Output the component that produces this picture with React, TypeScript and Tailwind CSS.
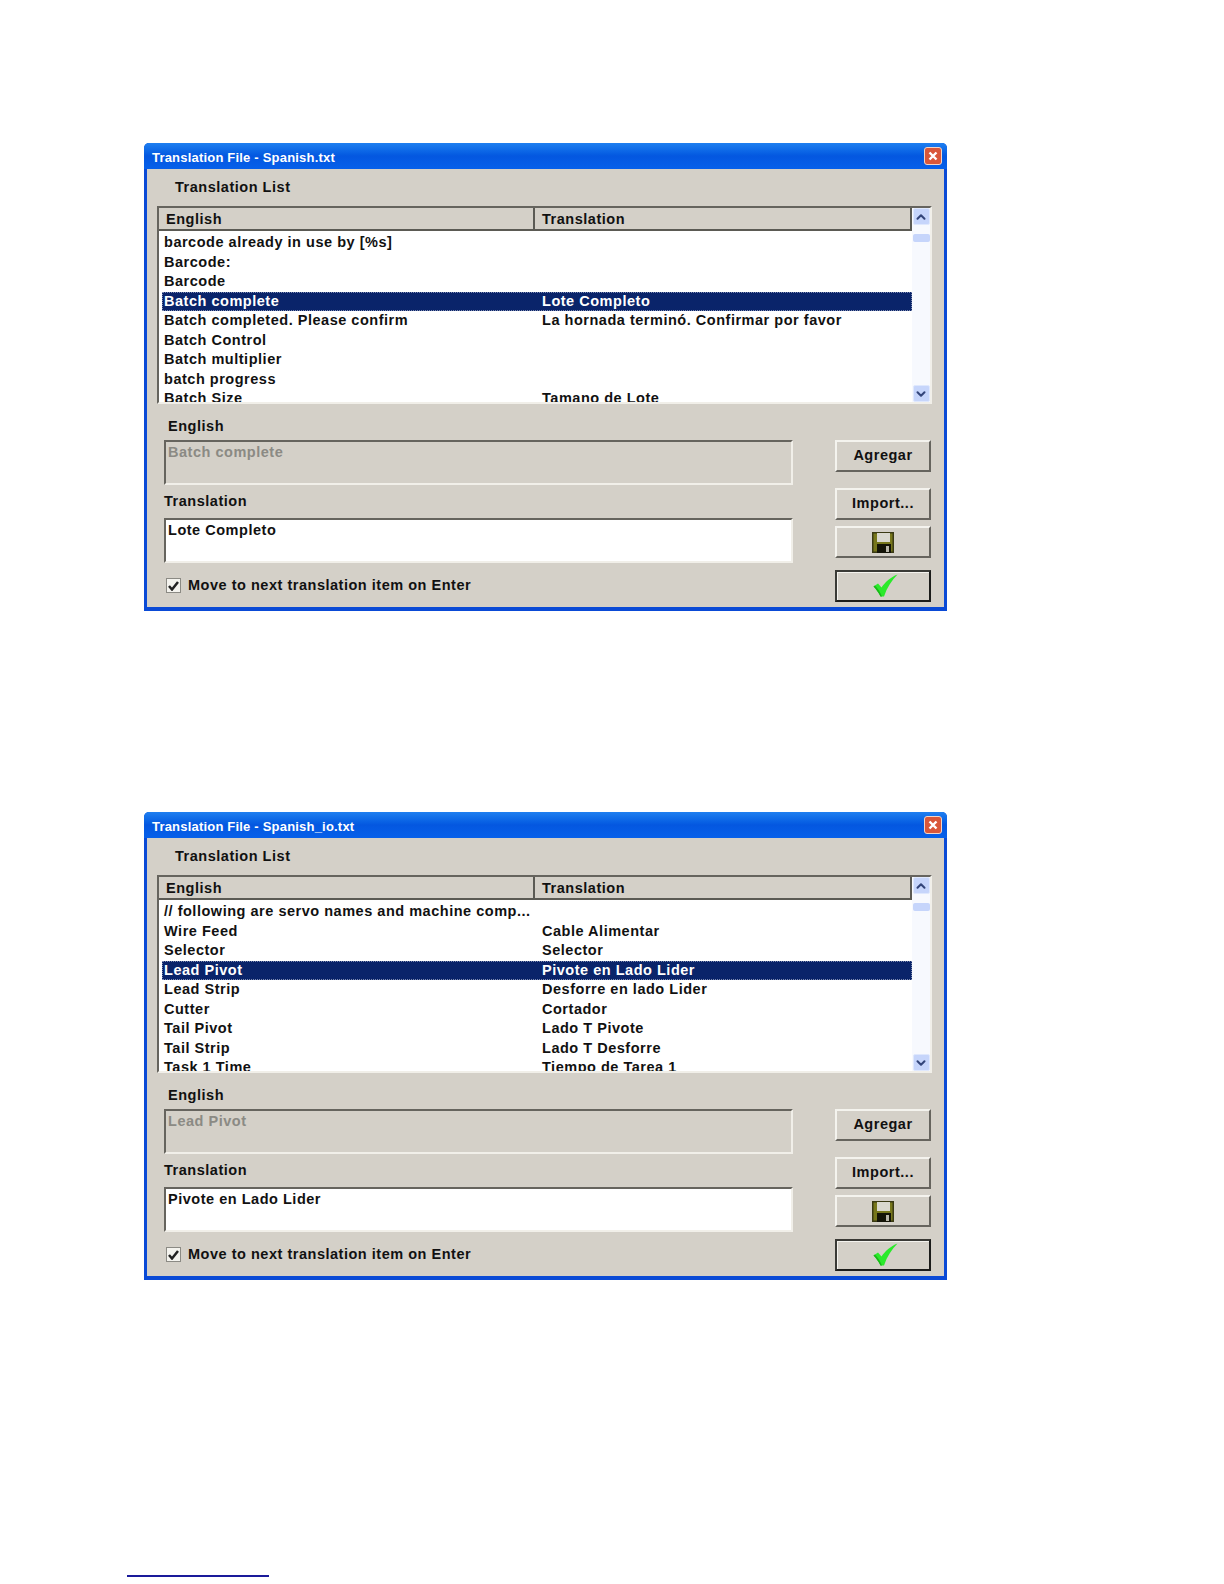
import { ChevronDown, ChevronUp } from 'lucide-react';

type Row = { en: string; tr?: string; selected?: boolean };

const firstRows: Row[] = [
  { en: 'barcode already in use by [%s]' },
  { en: 'Barcode:' },
  { en: 'Barcode' },
  { en: 'Batch complete', tr: 'Lote Completo', selected: true },
  { en: 'Batch completed. Please confirm', tr: 'La hornada terminó. Confirmar por favor' },
  { en: 'Batch Control' },
  { en: 'Batch multiplier' },
  { en: 'batch progress' },
  { en: 'Batch Size', tr: 'Tamano de Lote' },
];

const secondRows: Row[] = [
  { en: '// following are servo names and machine comp...' },
  { en: 'Wire Feed', tr: 'Cable Alimentar' },
  { en: 'Selector', tr: 'Selector' },
  { en: 'Lead Pivot', tr: 'Pivote en Lado Lider', selected: true },
  { en: 'Lead Strip', tr: 'Desforre en lado Lider' },
  { en: 'Cutter', tr: 'Cortador' },
  { en: 'Tail Pivot', tr: 'Lado T Pivote' },
  { en: 'Tail Strip', tr: 'Lado T Desforre' },
  { en: 'Task 1 Time', tr: 'Tiempo de Tarea 1' },
];

function CloseButton() {
  return (
    <div className="w-[18px] h-[18px] rounded-[3px] border border-[#f2d5c8] bg-[#d9573a] flex items-center justify-center">
      <svg width="12" height="12" viewBox="0 0 12 12">
        <path d="M2.5 2.5l7 7M9.5 2.5l-7 7" stroke="#ffffff" strokeWidth="2.4" />
      </svg>
    </div>
  );
}

function FloppyIcon() {
  return (
    <svg width="22" height="21" viewBox="0 0 22 21">
      <rect x="0" y="0" width="22" height="21" fill="#3a3a14" />
      <rect x="1.5" y="1.5" width="19" height="18" fill="#77771c" />
      <rect x="5" y="1" width="13" height="9" fill="#d9d8cf" />
      <rect x="5" y="12" width="14" height="9" fill="#141408" />
      <rect x="14" y="14" width="3" height="6" fill="#b8b6aa" />
    </svg>
  );
}

function CheckIcon() {
  return (
    <svg width="25" height="23" viewBox="0 0 25 23" className="ml-[4px] -mt-[1px]">
      <path d="M0.5 12.5L5 9.5L8.5 13.5C12 8.5 17.5 3 24.5 0.5C18.5 6.5 14 13.5 11 22.5H7.5C5.5 18.5 3 15 0.5 12.5Z" fill="#2bea2b" />
      <path d="M7.5 22.5C5.5 18.5 3 15 0.5 12.5L2 11.5C4.5 14.2 7.2 18 9 22.5Z" fill="#18b818" />
    </svg>
  );
}

function ScrollArrow({ down }: { down?: boolean }) {
  return (
    <div className="w-[17px] h-[17px] mx-auto rounded-[2px] bg-[#c6d5fb] border border-[#dfe8fd] flex items-center justify-center text-[#33457a]">
      {down ? <ChevronDown size={14} strokeWidth={3.5} /> : <ChevronUp size={14} strokeWidth={3.5} />}
    </div>
  );
}

function Win98Button({ children, isDefault }: { children: React.ReactNode; isDefault?: boolean }) {
  return (
    <div
      className={
        isDefault
          ? 'w-[96px] h-[32px] flex items-center justify-center border-2 border-t-[#3a3a36] border-l-[#3a3a36] border-r-[#1c1c1a] border-b-[#1c1c1a] bg-[#d4d0c8] shadow-[inset_1px_1px_0_#f4f3ee]'
          : 'w-[96px] h-[32px] flex items-center justify-center border-2 border-t-[#f4f3ee] border-l-[#f4f3ee] border-r-[#66645e] border-b-[#66645e] bg-[#d4d0c8]'
      }
    >
      {children}
    </div>
  );
}

function TranslationDialog({ title, rows, english, translation }: { title: string; rows: Row[]; english: string; translation: string }) {
  return (
    <div className="w-[803px] h-[468px] flex flex-col rounded-t-[5px] bg-[#0a4ad6] px-[3px] pb-[4px] font-['Liberation_Sans',sans-serif] font-bold text-[14.5px] tracking-[0.52px] text-[#111111]">
      {/* title bar */}
      <div className="h-[26px] -mx-[3px] shrink-0 rounded-t-[5px] bg-linear-to-b from-[#1f7ff0] via-[#0457e0] to-[#0660ea] flex items-center justify-between pl-[8px] pr-[5px]">
        <span className="text-white text-[13px] tracking-[0.2px] pt-[3px]">{title}</span>
        <CloseButton />
      </div>

      <div className="flex-1 bg-[#d4d0c8] flex flex-col">
        <div className="h-[37px] pl-[28px] flex items-center leading-none pb-[1px]">Translation List</div>

        {/* list */}
        <div className="ml-[10px] w-[775px] h-[198px] flex overflow-hidden border-2 border-t-[#66645e] border-l-[#66645e] border-r-[#f1efe9] border-b-[#f1efe9] bg-white">
          <div className="w-[753px] flex flex-col">
            <div className="h-[23px] shrink-0 flex bg-[#d4d0c8] border-b-2 border-r-2 border-[#5b5a54] leading-[22px]">
              <div className="w-[376px] pl-[7px] border-r-2 border-[#5b5a54]">English</div>
              <div className="pl-[7px]">Translation</div>
            </div>
            <div className="pt-[2px] pl-[3px]">
              {rows.map((row) => (
                <div
                  key={row.en}
                  className={
                    row.selected
                      ? 'h-[19.5px] flex leading-[18px] bg-[#0a246a] text-white outline-1 -outline-offset-1 outline-dotted outline-[#7f8cb0]'
                      : 'h-[19.5px] flex leading-[19px]'
                  }
                >
                  <div className="w-[380px] pl-[2px] whitespace-nowrap">{row.en}</div>
                  <div className="whitespace-nowrap">{row.tr}</div>
                </div>
              ))}
            </div>
          </div>
          <div className="flex-1 bg-[#f7f9fe] flex flex-col justify-between">
            <div>
              <ScrollArrow />
              <div className="w-[17px] h-[8px] mx-auto mt-[9px] rounded-[2px] bg-[#c6d5fb]" />
            </div>
            <ScrollArrow down />
          </div>
        </div>

        {/* edit area and buttons */}
        <div className="flex mt-[14px] pl-[17px]">
          <div className="w-[629px]">
            <div className="pl-[4px] h-[23px] leading-[19px] -mt-[1px]">English</div>
            <div className="w-[629px] h-[45px] border-2 border-t-[#66645e] border-l-[#66645e] border-r-[#f1efe9] border-b-[#f1efe9] pl-[2px] leading-[21px] text-[#8b8a84]">
              {english}
            </div>
            <div className="h-[33px] flex items-center pt-[1px]">Translation</div>
            <div className="w-[629px] h-[45px] bg-white border-2 border-t-[#66645e] border-l-[#66645e] border-r-[#f1efe9] border-b-[#f1efe9] pl-[2px] leading-[21px]">
              {translation}
            </div>
            <div className="flex items-center mt-[15px] pl-[2px] gap-[7px]">
              <div className="w-[15px] h-[15px] bg-[#f4f3ee] border border-[#8b8a84] flex items-center justify-center">
                <svg width="11" height="10" viewBox="0 0 11 10">
                  <path d="M1 5l3 3.5L10 1" fill="none" stroke="#222222" strokeWidth="2.5" />
                </svg>
              </div>
              <span className="leading-none">Move to next translation item on Enter</span>
            </div>
          </div>
          <div className="ml-[42px] pt-[22px] flex flex-col">
            <Win98Button>Agregar</Win98Button>
            <div className="mt-[16px] flex flex-col gap-[6px]">
              <Win98Button>Import...</Win98Button>
              <Win98Button>
                <FloppyIcon />
              </Win98Button>
            </div>
            <div className="mt-[12px]">
              <Win98Button isDefault>
                <CheckIcon />
              </Win98Button>
            </div>
          </div>
        </div>
      </div>
    </div>
  );
}

export default function App() {
  return (
    <div className="w-[1224px] h-[1584px] overflow-hidden bg-white pt-[143px] pl-[144px]">
      <TranslationDialog title="Translation File - Spanish.txt" rows={firstRows} english="Batch complete" translation="Lote Completo" />
      <div className="mt-[201px]">
        <TranslationDialog title="Translation File - Spanish_io.txt" rows={secondRows} english="Lead Pivot" translation="Pivote en Lado Lider" />
      </div>
      <div className="mt-[295px] -ml-[17px] w-[142px] h-[1.5px] bg-[#1a1a9a]" />
    </div>
  );
}
